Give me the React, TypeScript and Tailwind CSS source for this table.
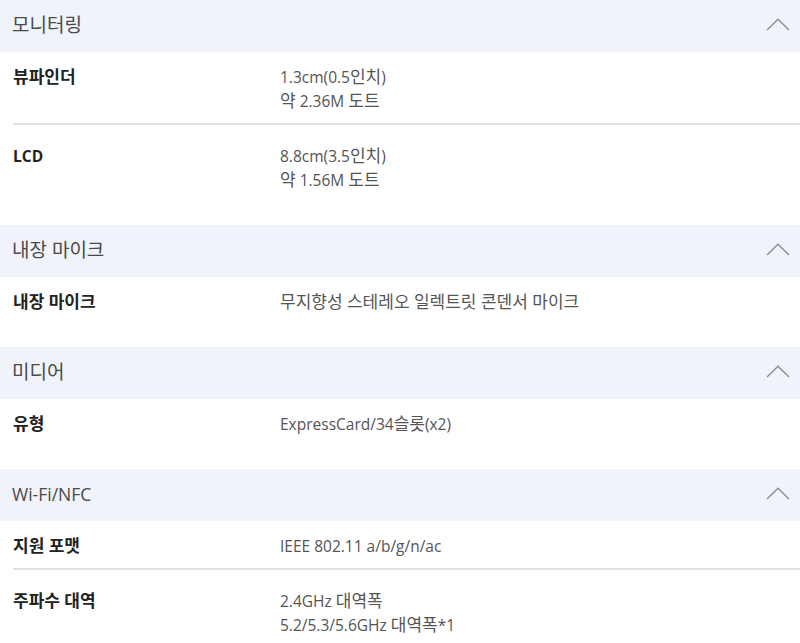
const FONT = "font-['Open_Sans','Noto_Sans_CJK_KR',sans-serif]";

type Row = { label: string; lines: string[] };
type Section = { title: string; rows: Row[] };

const SECTIONS: Section[] = [
  {
    title: "모니터링",
    rows: [
      { label: "뷰파인더", lines: ["1.3cm(0.5인치)", "약 2.36M 도트"] },
      { label: "LCD", lines: ["8.8cm(3.5인치)", "약 1.56M 도트"] },
    ],
  },
  {
    title: "내장 마이크",
    rows: [{ label: "내장 마이크", lines: ["무지향성 스테레오 일렉트릿 콘덴서 마이크"] }],
  },
  {
    title: "미디어",
    rows: [{ label: "유형", lines: ["ExpressCard/34슬롯(x2)"] }],
  },
  {
    title: "Wi-Fi/NFC",
    rows: [
      { label: "지원 포맷", lines: ["IEEE 802.11 a/b/g/n/ac"] },
      { label: "주파수 대역", lines: ["2.4GHz 대역폭", "5.2/5.3/5.6GHz 대역폭*1"] },
    ],
  },
];

// Hangul runs render a touch larger than the latin text around them,
// so split them out and give them their own size.
function Mixed({ text, koClass }: { text: string; koClass: string }) {
  const parts = text.split(/([\uAC00-\uD7A3]+(?: [\uAC00-\uD7A3]+)*)/);
  return (
    <>
      {parts.map((p, i) =>
        /[\uAC00-\uD7A3]/.test(p) ? (
          <span key={i} className={koClass}>
            {p}
          </span>
        ) : (
          p
        ),
      )}
    </>
  );
}

function ChevronUp() {
  return (
    <svg width="24" height="13" viewBox="0 0 24 13" fill="none" className="text-[#8a8d93]">
      <path d="M1 12 L12 1.2 L23 12" stroke="currentColor" strokeWidth="1.4" />
    </svg>
  );
}

function SpecSection({ section }: { section: Section }) {
  return (
    <section>
      <div className="flex h-[52px] items-center justify-between bg-[#f0f3f9] pb-[3px] pl-[12px] pr-[10px]">
        <h2 className="text-[17.5px] leading-6 text-[#4a4a4a]">
          <Mixed text={section.title} koClass="text-[19px] leading-none" />
        </h2>
        <ChevronUp />
      </div>
      <div className="pl-[13px]">
        {section.rows.map((row, i) => {
          const last = i === section.rows.length - 1;
          return (
            <div
              key={row.label}
              className={
                "flex " +
                (i === 0 ? "pt-[13px] " : "pt-[19px] ") +
                (last ? "pb-[33px]" : "border-b-2 border-[#e2e2e2] pb-[10px]")
              }
            >
              <div className="h-6 w-[267px] shrink-0 text-[15.5px] font-bold leading-6 text-[#222]">
                <Mixed text={row.label} koClass="text-[17px] leading-none" />
              </div>
              <div className="text-[15.5px] leading-6 text-[#555]">
                {row.lines.map((l) => (
                  <div key={l} className="h-6">
                    <Mixed text={l} koClass="text-[17px] leading-none" />
                  </div>
                ))}
              </div>
            </div>
          );
        })}
      </div>
    </section>
  );
}

export default function App() {
  return (
    <div className={"h-[643px] w-[800px] overflow-hidden bg-white " + FONT}>
      {SECTIONS.map((s) => (
        <SpecSection key={s.title} section={s} />
      ))}
    </div>
  );
}
